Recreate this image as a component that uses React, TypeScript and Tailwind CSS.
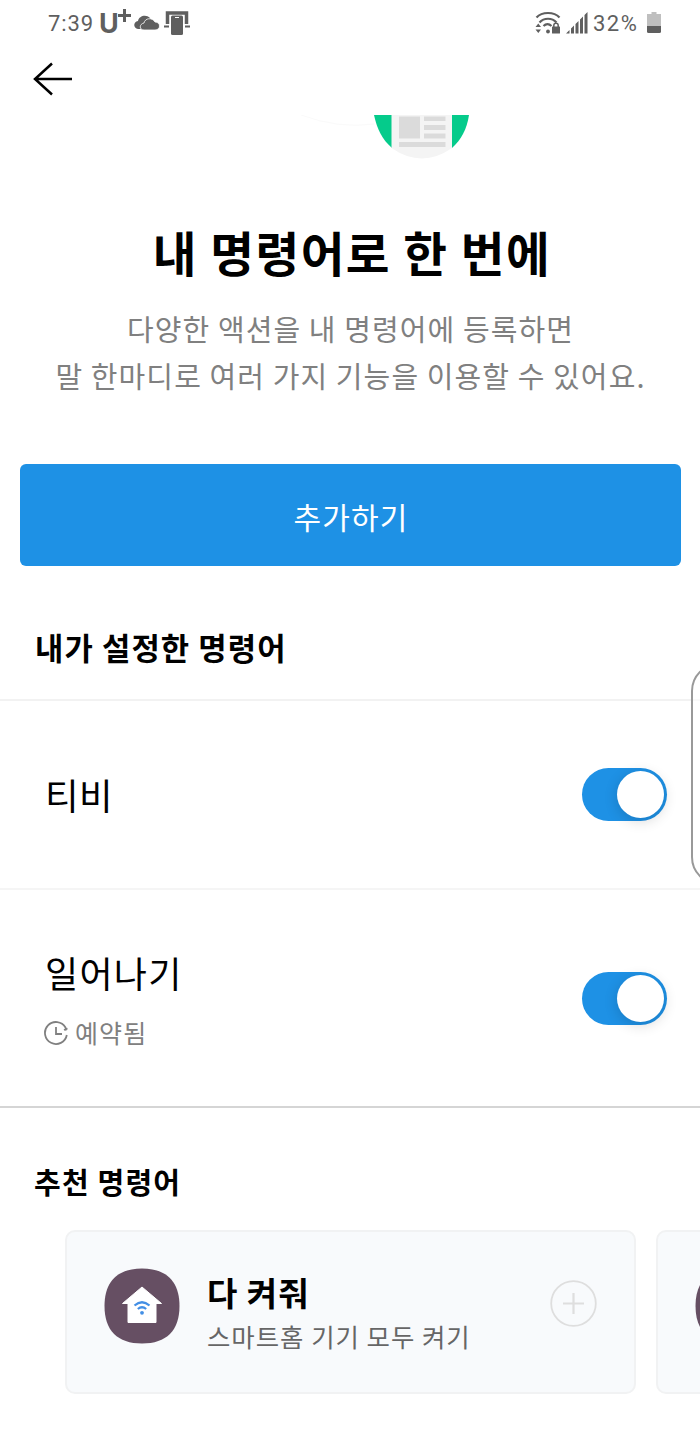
import type { ReactNode } from "react";

function StatusBar() {
  return (
    <div className="flex h-[46px] items-center justify-between pl-12 pr-[38px] font-['Roboto',sans-serif] text-[22px] text-[#5f5f5f]">
      <div className="flex items-center">
        <span className="w-[51px] pt-px tracking-[0.9px]">7:39</span>
        <span className="font-['Inter',sans-serif] text-[27px] font-bold leading-none">U</span>
        <svg className="-ml-px mb-4" width="13" height="13" viewBox="0 0 13 13">
          <path d="M6.5 0v13M0 6.5h13" stroke="currentColor" strokeWidth="3" />
        </svg>
        <svg className="ml-[3px]" width="26" height="16" viewBox="0 0 26 16">
          <path d="M6 14H4C-1 13-1 7 4 6 5 1 12-1 16 3c2 4-2 11-7 11Z" fill="currentColor" />
          <path d="M10 15c-5 0-5-6 0-7 1-5 8-6 11-1 6 0 6 8 0 8Z" fill="currentColor" stroke="white" strokeWidth="0.8" />
        </svg>
        <svg className="ml-[4px]" width="26" height="24" viewBox="0 0 26 24" fill="none">
          <path d="M3.500 13V2h19v11" stroke="currentColor" strokeWidth="3.500" />
          <path d="M0 15.500h5M21 15.500h5" stroke="currentColor" strokeWidth="2" />
          <rect x="7" y="4.500" width="12" height="19.500" rx="1.5" fill="currentColor" />
          <path d="M11 6.500h4" stroke="white" strokeWidth="1" />
        </svg>
      </div>

      <div className="flex items-center">
        <svg width="26" height="24" viewBox="0 0 26 24" fill="none" stroke="currentColor">
          <path d="M1.5 6.5C7 .5 19 .5 24.500 6.500M4.500 11.500c4.500-5 12.500-5 17 0M8.500 15c2.500-2.500 5.500-2.500 8 0" strokeWidth="2.200" />
          <path d="m.5 16 2.800-3.500L6 16ZM.5 18.500 3.300 22 6 18.500Z" fill="currentColor" stroke="none" />
          <circle cx="13" cy="20.500" r="1.900" fill="currentColor" stroke="none" />
          <rect x="17" y="15.500" width="8" height="7" rx="0.500" fill="currentColor" stroke="none" />
          <path d="M18.800 16v-1.500a2.200 2.200 0 0 1 4.400 0V16" strokeWidth="1.500" />
        </svg>
        <svg className="ml-[5px]" width="22" height="22" viewBox="0 0 22 22" fill="currentColor">
          <path d="M0 21.500 3.500 18v3.500ZM5 16.500 8 13.500v8H5ZM9.500 12l3-3v12.500h-3ZM14 7.500l3-3v17h-3ZM18.500 3l3-3v21.500h-3Z" />
        </svg>
        <span className="ml-[5px] w-[54px] pt-px tracking-[1.5px]">32%</span>
        <svg width="15" height="22" viewBox="0 0 15 22">
          <path d="M0 2h4.500V0h5v2H14v12H0Z" fill="#bfbfbf" />
          <path d="M0 14h14v5.500q0 1.500-1.500 1.500h-11Q0 21 0 19.500Z" fill="currentColor" />
        </svg>
      </div>
    </div>
  );
}

function Toggle() {
  return (
    <div className="flex h-[53px] w-[85px] shrink-0 items-center justify-end rounded-full bg-[#1e91e5] pr-[3px]">
      <div className="size-[47px] rounded-full bg-white shadow-[0_3px_14px_rgba(0,0,0,0.16)]" />
    </div>
  );
}

function CommandRow({ className, children }: { className: string; children: ReactNode }) {
  return (
    <div className={`flex items-center justify-between pl-[45px] pr-[33px] ${className}`}>
      <div>{children}</div>
      <Toggle />
    </div>
  );
}

function HomeIcon() {
  return (
    <svg className="mb-3 shrink-0" width="76" height="76" viewBox="0 0 76 76">
      <path d="M38 .5C62.500 .5 75.500 13.500 75.500 38S62.500 75.500 38 75.500.5 62.500 .5 38 13.500 .5 38 .5Z" fill="#664f63" />
      <path d="M38 19 18.500 35.500h5.500V54.500h28V35.500h5.500Z" fill="white" stroke="white" strokeLinejoin="round" />
      <path d="M30.500 37.500q7.500-6.500 15 0M33.800 41q4.200-3.500 8.400 0" fill="none" stroke="#438fe5" strokeWidth="2.200" />
      <circle cx="38" cy="44.800" r="1.900" fill="#438fe5" />
    </svg>
  );
}

export default function App() {
  return (
    <div className="relative h-[1435px] w-[700px] overflow-hidden bg-white font-['Noto_Sans_CJK_KR',sans-serif] text-black">
      <StatusBar />

      <header className="h-[69px] pl-[33px] pt-4">
        <svg width="40" height="34" viewBox="0 0 40 34" fill="none" stroke="black" strokeWidth="2.500">
          <path d="M39 17H2M19 1.500 2 17l17 15.500" />
        </svg>
      </header>

      {/* Illustration, scrolled under the header */}
      <div className="h-[105px]">
        <svg width="700" height="60" viewBox="0 0 700 60">
          <path d="M301 0q38 14 73 9" fill="none" stroke="#fafafa" />
          <path d="M374 0c3 14 8.500 25 18 33h60c9-8 15-19 17-33Z" fill="#05cb8b" />
          <path d="M391.500 0h60.500v33q-30 21-60.500 0Z" fill="#f4f4f4" />
          <path d="M399 1.500h21v22h-21ZM424 1.500h21.500v4.500H424ZM424 10h21.500v5H424ZM424 18.500h21.500v5H424ZM399 27h46.500v5H399Z" fill="#dbdbdb" />
        </svg>
      </div>

      <section className="text-center">
        <h1 className="h-[85px] pl-1 text-[47.500px] font-bold leading-[64px] tracking-[1.500px]">내 명령어로 한 번에</h1>
        <p className="h-[159px] pl-px text-[29px] leading-[47px] tracking-[1.100px] text-[#808080]">
          다양한 액션을 내 명령어에 등록하면
          <br />
          말 한마디로 여러 가지 기능을 이용할 수 있어요.
        </p>
      </section>

      <button className="mx-5 block h-[102px] w-[661px] rounded-[6px] bg-[#1e91e5] pl-px pt-0.5 text-[30px] tracking-[1.200px] text-white">
        추가하기
      </button>

      <h2 className="flex h-[133px] items-center pl-[35px] pt-[30px] text-[30.800px] font-bold tracking-[1.100px]">
        내가 설정한 명령어
      </h2>

      <CommandRow className="h-[189px] border-t-2 border-[#f2f2f2]">
        <p className="text-[36.500px] leading-[50px] tracking-[0.500px]">티비</p>
      </CommandRow>
      <CommandRow className="h-[220px] border-b-2 border-t-2 border-b-[#d5d5d5] border-t-[#f5f5f5]">
        <p className="text-[36px] leading-[54px] tracking-[1.300px]">일어나기</p>
        <div className="-ml-px mt-3.5 flex items-center gap-[7px] text-[25px] leading-[38px] tracking-[1.100px] text-[#808080]">
          <svg className="mt-0.5" width="24" height="24" viewBox="0 0 24 24" fill="none" stroke="currentColor" strokeWidth="1.800">
            <path d="M22.800 14A11 11 0 1 1 21.500 6.500L22 9.500M20 9l3.500-1.500M12 6v7h6" />
          </svg>
          예약됨
        </div>
      </CommandRow>

      <h2 className="flex h-[122px] items-center pl-[34px] pt-[25px] text-[29px] font-bold tracking-[1.200px]">
        추천 명령어
      </h2>

      <div className="flex gap-5 pl-[65px]">
        <div className="flex h-[164px] w-[571px] shrink-0 items-center rounded-[10px] border-2 border-[#f1f2f3] bg-[#f8fafc] pl-[37px] pr-[37px]">
          <HomeIcon />
          <div className="ml-[27px] mt-px flex-1">
            <p className="text-[33px] font-bold leading-[46px] tracking-[1px]">다 켜줘</p>
            <p className="text-[25.400px] leading-[42px] tracking-[1px] text-[#666]">스마트홈 기기 모두 켜기</p>
          </div>
          <svg className="mb-[17px]" width="47" height="47" viewBox="0 0 47 47" fill="none" stroke="#dedede">
            <circle cx="23.500" cy="23.500" r="22.300" strokeWidth="1.800" />
            <path d="M23.500 13v21M13 23.500h21" strokeWidth="2.200" />
          </svg>
        </div>
        <div className="flex h-[164px] w-[571px] shrink-0 items-center rounded-[10px] border-2 border-[#f1f2f3] bg-[#f8fafc] pl-[37px]">
          <HomeIcon />
        </div>
      </div>

      {/* Edge panel handle */}
      <div className="absolute -right-[51px] top-[663px] h-[222px] w-[60px] rounded-[28px] border-2 border-[#999] bg-white/50" />
    </div>
  );
}
